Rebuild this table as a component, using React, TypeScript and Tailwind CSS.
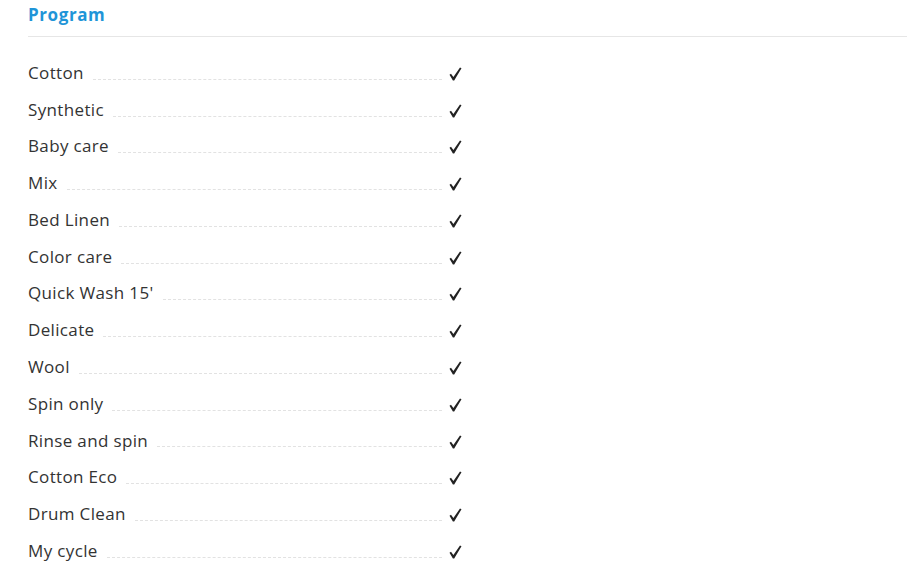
import React from "react";

const items = [
  "Cotton",
  "Synthetic",
  "Baby care",
  "Mix",
  "Bed Linen",
  "Color care",
  "Quick Wash 15'",
  "Delicate",
  "Wool",
  "Spin only",
  "Rinse and spin",
  "Cotton Eco",
  "Drum Clean",
  "My cycle",
];

function Check() {
  return (
    <svg width="13" height="14" viewBox="0 0 13 14" className="shrink-0">
      <polygon
        points="0.5,7.8 2,6.8 4.4,10 11,0.4 12.5,1.2 5.2,13.4 3.9,13.4"
        fill="#222"
      />
    </svg>
  );
}

export default function App() {
  return (
    <div
      className="bg-white w-[907px] h-[568px] overflow-hidden pl-[28px]"
      style={{ fontFamily: '"Open Sans", "Liberation Sans", sans-serif' }}
    >
      <div className="border-b border-[#e6e6e6] h-[37px] flex items-center pb-[8px]">
        <h2 className="text-[17px] font-bold text-[#1f95d8] leading-none tracking-[0.6px]">Program</h2>
      </div>
      <ul className="mt-[17px] w-[434px]">
        {items.map((it) => (
          <li key={it} className="h-[36.77px] flex items-center text-[17px] tracking-[0.35px] text-[#333]">
            <span className="leading-none whitespace-nowrap">{it}</span>
            <span className="flex-1 ml-[9px] mr-[7px] border-b border-dashed border-[#e2e2e2] self-end mb-[11px]" />
            <span className="mt-[3px]">
              <Check />
            </span>
          </li>
        ))}
      </ul>
    </div>
  );
}
